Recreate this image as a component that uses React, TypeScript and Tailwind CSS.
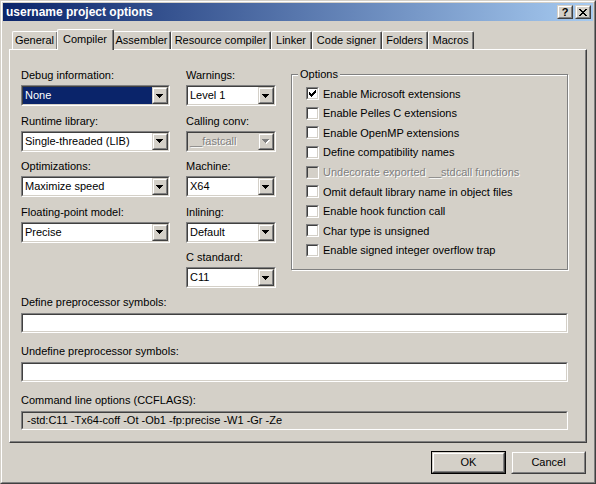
import React from 'react';

type P = { className?: string; innerClass?: string; children?: React.ReactNode };

function Sunken({ className = '', innerClass = '', children }: P) {
  return (
    <div className={`border border-t-[#808080] border-l-[#808080] border-r-white border-b-white ${className}`}>
      <div className={`w-full h-full border border-t-[#404040] border-l-[#404040] border-r-[#d4d0c8] border-b-[#d4d0c8] ${innerClass}`}>
        {children}
      </div>
    </div>
  );
}

function Raised({ className = '', innerClass = '', children }: P) {
  return (
    <div className={`border border-t-[#d4d0c8] border-l-[#d4d0c8] border-r-[#404040] border-b-[#404040] ${className}`}>
      <div className={`w-full h-full border border-t-white border-l-white border-r-[#808080] border-b-[#808080] bg-[#d4d0c8] flex items-center justify-center ${innerClass}`}>
        {children}
      </div>
    </div>
  );
}

function ArrowRects({ fill }: { fill: string }) {
  return (
    <g fill={fill}>
      <rect x="0" y="0" width="7" height="1" />
      <rect x="1" y="1" width="5" height="1" />
      <rect x="2" y="2" width="3" height="1" />
      <rect x="3" y="3" width="1" height="1" />
    </g>
  );
}

function Arrow({ disabled }: { disabled?: boolean }) {
  return (
    <svg width="8" height="5" viewBox="0 0 8 5" shapeRendering="crispEdges" className="block">
      {disabled && (
        <g transform="translate(1,1)">
          <ArrowRects fill="#ffffff" />
        </g>
      )}
      <ArrowRects fill={disabled ? '#808080' : '#000000'} />
    </svg>
  );
}

function Combo({ w, value, selected, disabled }: { w: string; value: string; selected?: boolean; disabled?: boolean }) {
  return (
    <Sunken className={`h-[21px] ${w}`} innerClass={`flex ${disabled ? 'bg-[#d4d0c8]' : 'bg-white'}`}>
      <div
        className={`flex-1 min-w-0 h-full flex items-center pl-[2px] whitespace-nowrap ${
          selected ? 'bg-[#0a246a] text-white' : disabled ? 'text-[#808080] [text-shadow:1px_1px_0_#ffffff]' : 'text-black'
        }`}
      >
        {value}
      </div>
      <Raised className="w-[16px] h-full shrink-0" innerClass="pt-[1px]">
        <Arrow disabled={disabled} />
      </Raised>
    </Sunken>
  );
}

function Field({ label, value, readonly }: { label: string; value?: string; readonly?: boolean }) {
  return (
    <div className="flex flex-col">
      <div className="h-[14px] leading-[14px] mb-[4px] whitespace-nowrap">{label}</div>
      <Sunken
        className={`w-[547px] ${readonly ? 'h-[19px]' : 'h-[20px]'}`}
        innerClass={`flex items-center pl-[4px] whitespace-nowrap ${readonly ? 'bg-[#d4d0c8]' : 'bg-white'}`}
      >
        {value}
      </Sunken>
    </div>
  );
}

function Check({ checked, disabled }: { checked?: boolean; disabled?: boolean }) {
  return (
    <Sunken className="w-[13px] h-[13px] shrink-0" innerClass={`flex items-center justify-center ${disabled ? 'bg-[#d4d0c8]' : 'bg-white'}`}>
      {checked && (
        <svg width="7" height="7" viewBox="0 0 7 7" shapeRendering="crispEdges" className="block">
          <g fill="#000">
            <rect x="6" y="0" width="1" height="1" />
            <rect x="5" y="1" width="2" height="1" />
            <rect x="0" y="2" width="1" height="1" />
            <rect x="4" y="2" width="3" height="1" />
            <rect x="0" y="3" width="2" height="1" />
            <rect x="3" y="3" width="3" height="1" />
            <rect x="0" y="4" width="5" height="1" />
            <rect x="1" y="5" width="3" height="1" />
            <rect x="2" y="6" width="1" height="1" />
          </g>
        </svg>
      )}
    </Sunken>
  );
}

function LabeledCombo({ label, w, value, selected, disabled }: { label: string; w: string; value: string; selected?: boolean; disabled?: boolean }) {
  return (
    <div className="flex flex-col">
      <div className="h-[14px] leading-[14px] mb-[3px] whitespace-nowrap">{label}</div>
      <Combo w={w} value={value} selected={selected} disabled={disabled} />
    </div>
  );
}

const tabs: { name: string; w: string; active?: boolean }[] = [
  { name: 'General', w: 'w-[46px]' },
  { name: 'Compiler', w: 'w-[57px]', active: true },
  { name: 'Assembler', w: 'w-[58px]' },
  { name: 'Resource compiler', w: 'w-[100px]' },
  { name: 'Linker', w: 'w-[41px]' },
  { name: 'Code signer', w: 'w-[70px]' },
  { name: 'Folders', w: 'w-[46px]' },
  { name: 'Macros', w: 'w-[46px]' },
];

const options: { label: string; checked?: boolean; disabled?: boolean }[] = [
  { label: 'Enable Microsoft extensions', checked: true },
  { label: 'Enable Pelles C extensions' },
  { label: 'Enable OpenMP extensions' },
  { label: 'Define compatibility names' },
  { label: 'Undecorate exported __stdcall functions', disabled: true },
  { label: 'Omit default library name in object files' },
  { label: 'Enable hook function call' },
  { label: 'Char type is unsigned' },
  { label: 'Enable signed integer overflow trap' },
];

export default function App() {
  return (
    <div className="w-[596px] h-[484px] bg-[#d4d0c8] text-[11px] text-black font-['Liberation_Sans',Arial,sans-serif] border border-t-[#d4d0c8] border-l-[#d4d0c8] border-r-[#404040] border-b-[#404040] select-none">
      <div className="w-full h-full border border-t-white border-l-white border-r-[#808080] border-b-[#808080] p-[1px] flex flex-col">
        {/* Title bar */}
        <div className="h-[18px] shrink-0 flex items-center justify-between bg-[linear-gradient(to_right,#0a246a,#a6caf0)] pl-[3px] pr-[2px]">
          <div className="text-white font-bold text-[12px] leading-[18px] whitespace-nowrap">username project options</div>
          <div className="flex gap-[2px]">
            <Raised className="w-[16px] h-[14px]">
              <span className="font-bold text-[11px] leading-[10px] text-black">?</span>
            </Raised>
            <Raised className="w-[16px] h-[14px]">
              <svg width="8" height="7" viewBox="0 0 8 7" shapeRendering="crispEdges" className="block">
                <g fill="#000">
                  <rect x="0" y="0" width="2" height="1" />
                  <rect x="6" y="0" width="2" height="1" />
                  <rect x="1" y="1" width="2" height="1" />
                  <rect x="5" y="1" width="2" height="1" />
                  <rect x="2" y="2" width="4" height="1" />
                  <rect x="3" y="3" width="2" height="1" />
                  <rect x="2" y="4" width="4" height="1" />
                  <rect x="1" y="5" width="2" height="1" />
                  <rect x="5" y="5" width="2" height="1" />
                  <rect x="0" y="6" width="2" height="1" />
                  <rect x="6" y="6" width="2" height="1" />
                </g>
              </svg>
            </Raised>
          </div>
        </div>

        {/* Body */}
        <div className="flex flex-col px-[6px] pt-[8px]">
          {/* Tabs */}
          <div className="flex items-end h-[20px] pl-[3px] relative z-10">
            {tabs.map((t) =>
              t.active ? (
                <div
                  key={t.name}
                  className={`${t.w} h-[21px] -mb-[1px] -mx-[1px] bg-[#d4d0c8] border-l border-t border-r border-l-white border-t-white border-r-[#404040] rounded-t-[2px] relative z-20`}
                >
                  <div className="h-full border-r border-r-[#808080] flex items-center justify-center pb-[2px] whitespace-nowrap">{t.name}</div>
                </div>
              ) : (
                <div
                  key={t.name}
                  className={`${t.w} h-[18px] bg-[#d4d0c8] border-l border-t border-r border-l-white border-t-white border-r-[#404040] rounded-t-[2px]`}
                >
                  <div className="h-full border-r border-r-[#808080] flex items-center justify-center whitespace-nowrap">{t.name}</div>
                </div>
              )
            )}
          </div>

          {/* Panel */}
          <div className="h-[394px] w-[578px] border border-t-white border-l-white border-r-[#404040] border-b-[#404040]">
            <div className="w-full h-full border-r border-b border-r-[#808080] border-b-[#808080] pl-[11px] pt-[18px] flex flex-col">
              <div className="flex items-start">
                <div className="w-[149px] flex flex-col gap-[7.5px]">
                  <LabeledCombo label="Debug information:" w="w-[149px]" value="None" selected />
                  <LabeledCombo label="Runtime library:" w="w-[149px]" value="Single-threaded (LIB)" />
                  <LabeledCombo label="Optimizations:" w="w-[149px]" value="Maximize speed" />
                  <LabeledCombo label="Floating-point model:" w="w-[149px]" value="Precise" />
                </div>
                <div className="w-[90px] ml-[16px] flex flex-col gap-[7.5px]">
                  <LabeledCombo label="Warnings:" w="w-[90px]" value="Level 1" />
                  <LabeledCombo label="Calling conv:" w="w-[90px]" value="__fastcall" disabled />
                  <LabeledCombo label="Machine:" w="w-[90px]" value="X64" />
                  <LabeledCombo label="Inlining:" w="w-[90px]" value="Default" />
                  <LabeledCombo label="C standard:" w="w-[90px]" value="C11" />
                </div>
                <div className="relative ml-[15px] mt-[6px] w-[277px] h-[196px] border border-[#808080] shadow-[1px_1px_0_#ffffff,inset_1px_1px_0_#ffffff] pt-[9px] pl-[14px]">
                  <div className="absolute -top-[8px] left-[6px] px-[2px] bg-[#d4d0c8] leading-[14px]">Options</div>
                  {options.map((o) => (
                    <div key={o.label} className="h-[19.6px] flex items-center gap-[4px] whitespace-nowrap">
                      <Check checked={o.checked} disabled={o.disabled} />
                      <span className={o.disabled ? 'text-[#808080] [text-shadow:1px_1px_0_#ffffff]' : ''}>{o.label}</span>
                    </div>
                  ))}
                </div>
              </div>

              <div className="mt-[7px] flex flex-col gap-[11px]">
                <Field label="Define preprocessor symbols:" />
                <Field label="Undefine preprocessor symbols:" />
                <Field label="Command line options (CCFLAGS):" value="-std:C11 -Tx64-coff -Ot -Ob1 -fp:precise -W1 -Gr -Ze" readonly />
              </div>
            </div>
          </div>

          {/* Buttons */}
          <div className="flex justify-end gap-[5px] mt-[8px] mr-[1px]">
            <div className="w-[75px] h-[23px] border border-black">
              <Raised className="w-full h-full">OK</Raised>
            </div>
            <Raised className="w-[75px] h-[23px]">Cancel</Raised>
          </div>
        </div>
      </div>
    </div>
  );
}
